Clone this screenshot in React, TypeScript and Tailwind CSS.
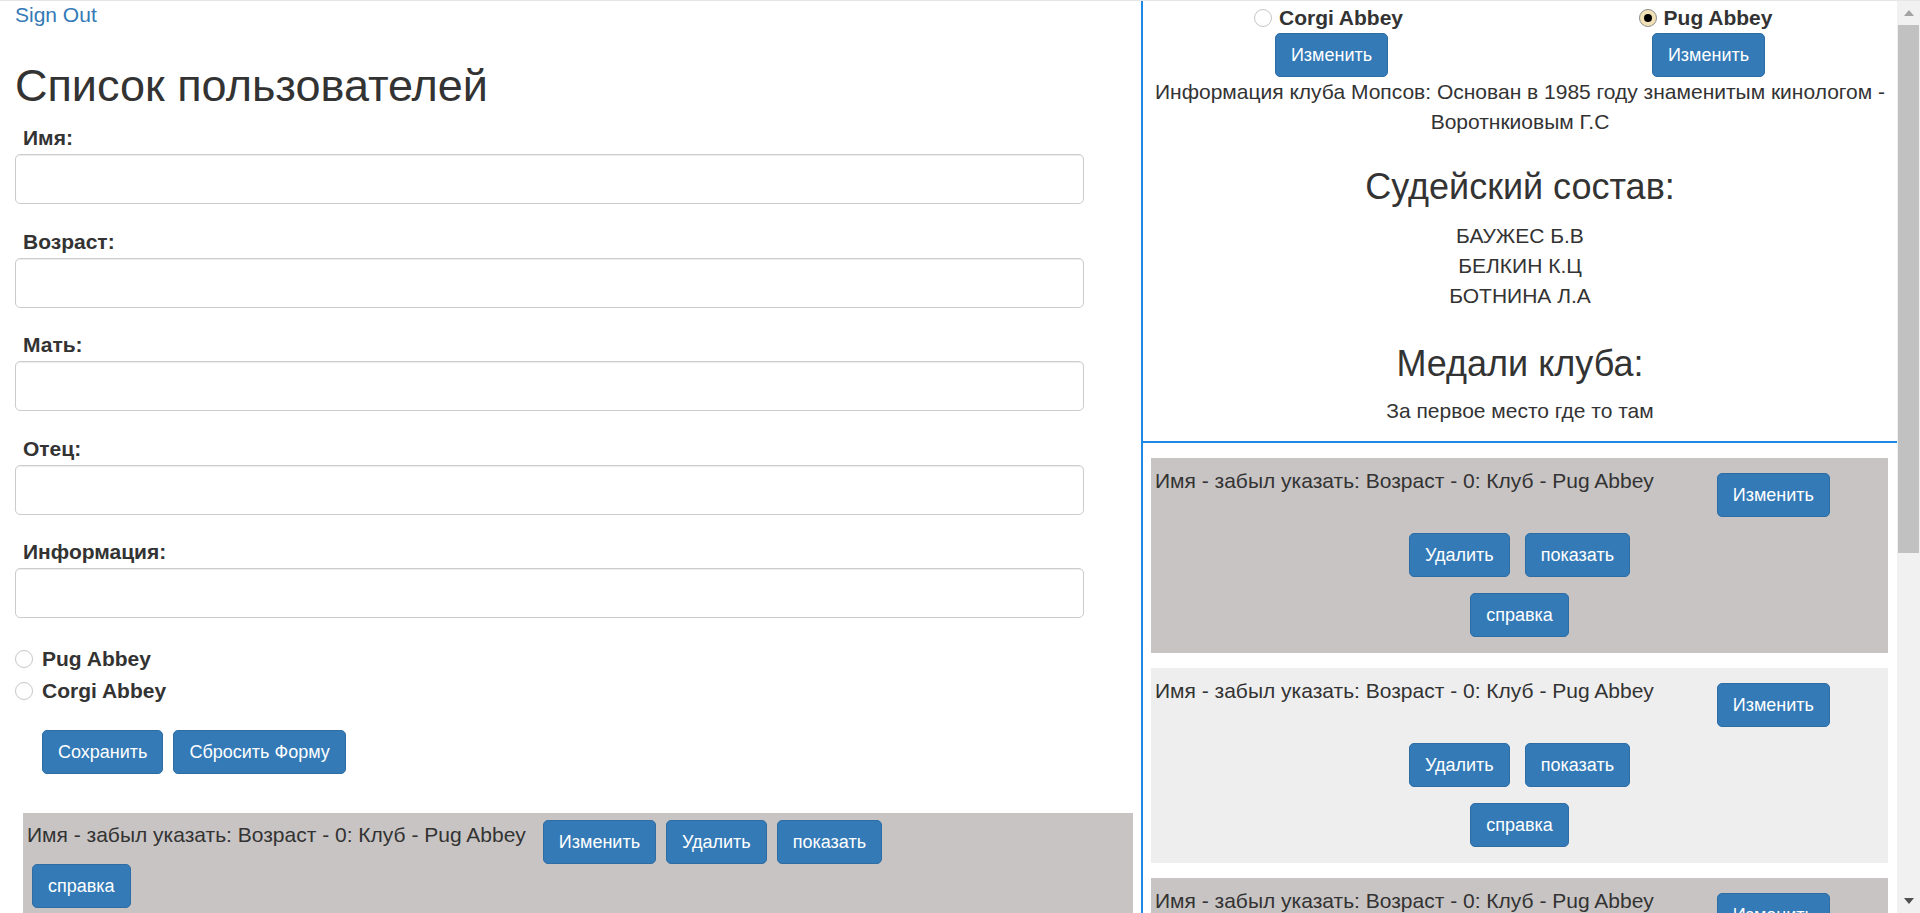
import React from "react";

type BtnProps = { children: React.ReactNode; className?: string };

const Btn = ({ children, className = "" }: BtnProps) => (
  <button
    type="button"
    className={`inline-flex items-center justify-center h-[44px] px-[15px] text-[18px] leading-[26px] text-white bg-[#337ab7] border border-[#2e6da4] rounded-[5px] whitespace-nowrap ${className}`}
  >
    {children}
  </button>
);

const Radio = ({ checked = false }: { checked?: boolean }) =>
  checked ? (
    <span className="w-[18px] h-[18px] rounded-full border border-[#8c8c8c] bg-[#f3e1b6] flex items-center justify-center shrink-0">
      <span className="w-[8px] h-[8px] rounded-full bg-black" />
    </span>
  ) : (
    <span className="w-[18px] h-[18px] rounded-full border border-[#c6c6c6] bg-white shrink-0" />
  );

const FIELDS = ["Имя:", "Возраст:", "Мать:", "Отец:", "Информация:"];

const ROW_TEXT = "Имя - забыл указать: Возраст - 0: Клуб - Pug Abbey";

const Card = ({ bg }: { bg: string }) => (
  <div className={`${bg} w-[737px] ml-[8px] mb-[15px] pt-[7px] pb-[8px] flex flex-col`}>
    <div className="flex items-start justify-between">
      <span className="pl-[4px] pt-[1px] text-[21px] leading-[30px] whitespace-nowrap">{ROW_TEXT}</span>
      <div className="my-[8px] mr-[58px]">
        <Btn>Изменить</Btn>
      </div>
    </div>
    <div className="flex justify-center gap-[15px] my-[8px]">
      <Btn>Удалить</Btn>
      <Btn>показать</Btn>
    </div>
    <div className="flex justify-center my-[8px]">
      <Btn>справка</Btn>
    </div>
  </div>
);

export default function App() {
  return (
    <div className="w-[1920px] h-[913px] overflow-hidden border-t border-[#e6e6e6] flex bg-white text-[#333] font-['Liberation_Sans',Arial,sans-serif]">
      {/* Left column */}
      <div className="w-[1141px] shrink-0 px-[15px] flex flex-col">
        <a className="h-[28px] text-[21px] leading-[28px] text-[#337ab7] self-start">Sign Out</a>
        <h1 className="mt-[32px] text-[45px] leading-[50px] font-normal">Список пользователей</h1>
        <div className="mt-[13px] flex flex-col">
          {FIELDS.map((f, i) => (
            <div key={f} className={i < FIELDS.length - 1 ? "flex flex-col mb-[23.5px]" : "flex flex-col"}>
              <label className="pl-[8px] h-[28px] mb-[2px] text-[21px] leading-[28px] font-bold">{f}</label>
              <div className="w-[1069px] h-[50px] border border-[#cccccc] rounded-[5px] bg-white shadow-[inset_0_1px_1px_rgba(0,0,0,0.075)]" />
            </div>
          ))}
        </div>
        <div className="mt-[25px] flex flex-col">
          <div className="h-[32px] flex items-center gap-[9px]">
            <Radio />
            <span className="text-[21px] leading-[32px] font-bold">Pug Abbey</span>
          </div>
          <div className="h-[32px] flex items-center gap-[9px]">
            <Radio />
            <span className="text-[21px] leading-[32px] font-bold">Corgi Abbey</span>
          </div>
        </div>
        <div className="mt-[23px] ml-[27px] flex gap-[10px]">
          <Btn>Сохранить</Btn>
          <Btn>Сбросить Форму</Btn>
        </div>
        <div className="mt-[39px] ml-[8px] w-[1110px] bg-[#c8c4c3] pt-[7px] pb-[10px] flex flex-col">
          <div className="flex items-start">
            <span className="pl-[4px] mr-[12px] text-[21px] leading-[30px] whitespace-nowrap">{ROW_TEXT}</span>
            <Btn className="mx-[5px]">Изменить</Btn>
            <Btn className="mx-[5px]">Удалить</Btn>
            <Btn className="mx-[5px]">показать</Btn>
          </div>
          <div className="flex pl-[4px]">
            <Btn className="mx-[5px]">справка</Btn>
          </div>
          <div className="h-[60px]" />
        </div>
      </div>

      {/* Right panel */}
      <div className="w-[756px] shrink-0 border-l-2 border-[#1e88e5] flex flex-col overflow-hidden">
        <div className="border-b-2 border-[#1e88e5] pb-[15px] flex flex-col">
          <div className="grid grid-cols-2 mt-[2px]">
            <div className="flex flex-col items-center">
              <div className="h-[30px] flex items-center gap-[7px] pr-[6px]">
                <Radio />
                <span className="text-[21px] leading-[30px] font-bold">Corgi Abbey</span>
              </div>
              <Btn>Изменить</Btn>
            </div>
            <div className="flex flex-col items-center">
              <div className="h-[30px] flex items-center gap-[7px] pr-[6px]">
                <Radio checked />
                <span className="text-[21px] leading-[30px] font-bold">Pug Abbey</span>
              </div>
              <Btn>Изменить</Btn>
            </div>
          </div>
          <p className="text-center text-[21px] leading-[30px] px-[4px]">
            Информация клуба Мопсов: Основан в 1985 году знаменитым кинологом - Воротнкиовым Г.С
          </p>
          <h3 className="mt-[30px] text-center text-[36px] leading-[40px] font-normal">Судейский состав:</h3>
          <div className="mt-[14px] flex flex-col items-center text-[21px] leading-[30px]">
            <span>БАУЖЕС Б.В</span>
            <span>БЕЛКИН К.Ц</span>
            <span>БОТНИНА Л.А</span>
          </div>
          <h3 className="mt-[33px] text-center text-[36px] leading-[40px] font-normal">Медали клуба:</h3>
          <p className="mt-[12px] text-center text-[21px] leading-[30px]">За первое место где то там</p>
        </div>
        <div className="pt-[15px] flex flex-col">
          <Card bg="bg-[#c8c4c3]" />
          <Card bg="bg-[#eeeeee]" />
          <Card bg="bg-[#c8c4c3]" />
        </div>
      </div>

      {/* Scrollbar */}
      <div className="w-[23px] shrink-0 bg-[#f1f1f1] flex flex-col">
        <div className="h-[24px] flex items-center justify-center">
          <svg width="10" height="6" viewBox="0 0 10 6">
            <polygon points="5,0 10,6 0,6" fill="#a3a3a3" />
          </svg>
        </div>
        <div className="h-[528px] mx-[1px] bg-[#c1c1c1]" />
        <div className="flex-1" />
        <div className="h-[24px] flex items-center justify-center">
          <svg width="10" height="6" viewBox="0 0 10 6">
            <polygon points="0,0 10,0 5,6" fill="#505050" />
          </svg>
        </div>
      </div>
    </div>
  );
}
